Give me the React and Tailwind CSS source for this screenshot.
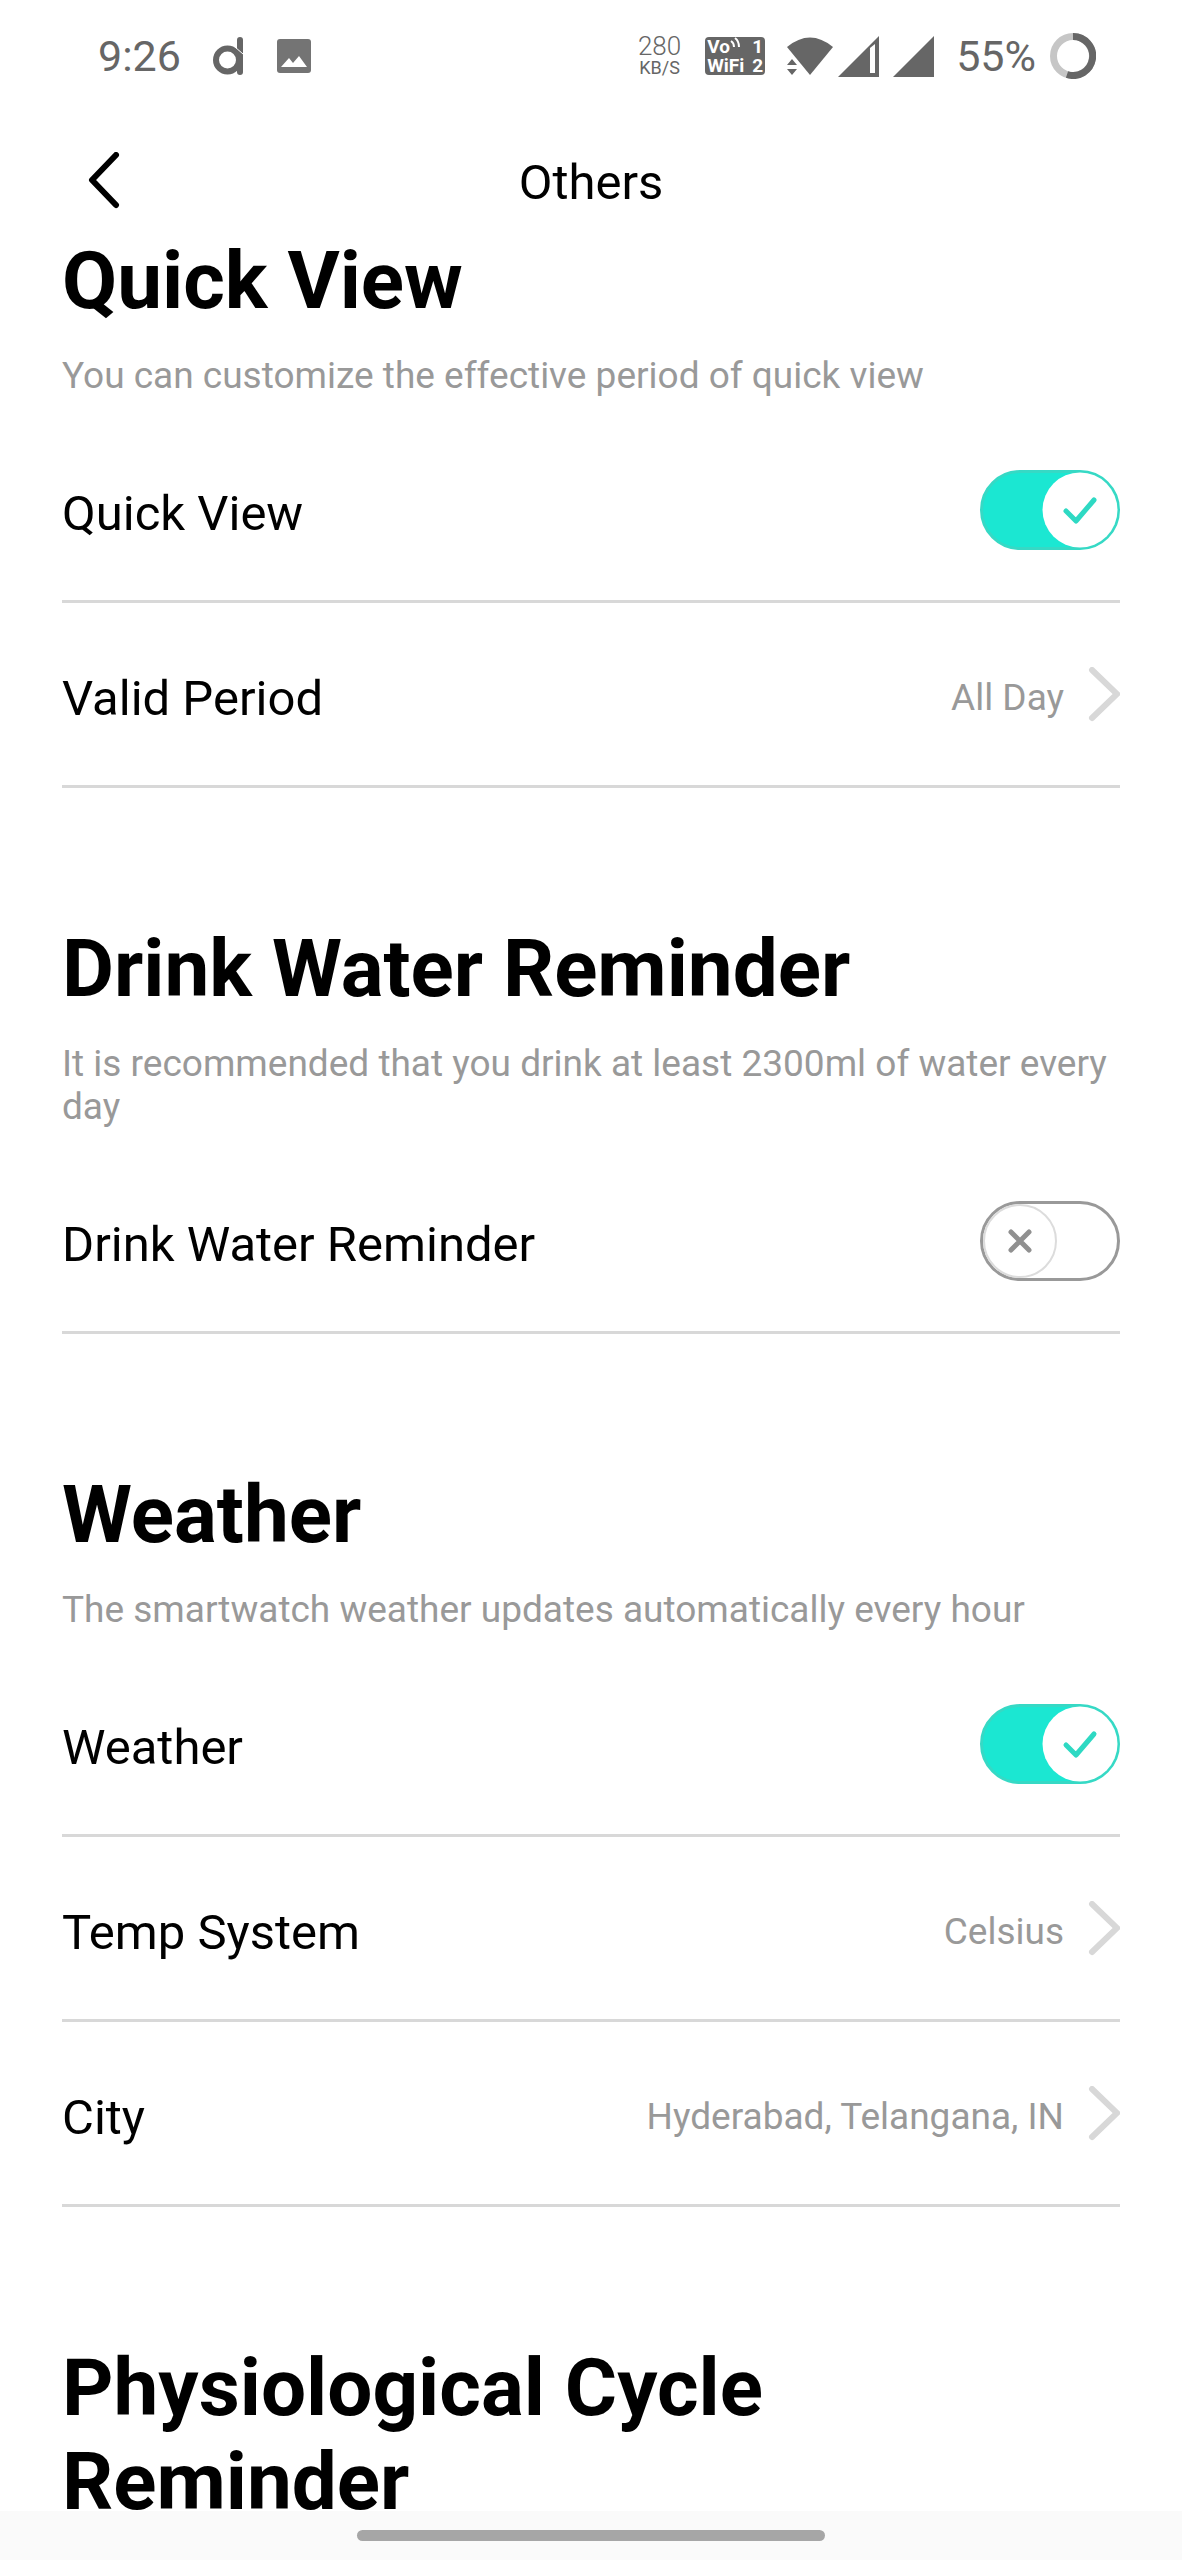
import { useState } from 'react';

const StatusBar = () => {
    return (
        <div className="flex h-28 shrink-0 items-center justify-between pl-[98px] pr-[86px] text-[43px] leading-none text-[#666666]">
            <div className="flex items-center">
                <span>9:26</span>
                <svg className="ml-8 h-10 w-[30px]" viewBox="0 0 30 40" fill="none" stroke="currentColor" strokeWidth="6">
                    <circle cx="14.5" cy="24" r="11.5" />
                    <path d="M27 4v32" strokeLinecap="round" />
                    <path d="M22 11l8 7" stroke="#ffffff" strokeWidth="1" />
                </svg>
                <svg className="ml-[34px] size-[34px]" viewBox="0 0 34 34">
                    <rect width="34" height="34" rx="3" fill="#747474" />
                    <path d="M4 28l8-9 4 5 6-7 8 11z" fill="#ffffff" />
                </svg>
            </div>
            <div className="flex items-center">
                <div className="flex flex-col items-center">
                    <span className="text-[26px] font-light leading-6">280</span>
                    <span className="text-[18px] leading-5">KB/S</span>
                </div>
                <div className="ml-6 flex h-[38px] w-[60px] flex-col rounded-sm bg-[#666666] px-0.5 text-[19px] font-bold leading-[19px] text-white">
                    <div className="flex justify-between">
                        <span className="flex">
                            Vo
                            <svg className="size-3" viewBox="0 0 12 12" fill="none" stroke="currentColor" strokeWidth="2">
                                <path d="M1 4q3 2 3 6M5 1q4 3 4 9" />
                            </svg>
                        </span>
                        <span>1</span>
                    </div>
                    <div className="flex justify-between">
                        <span>WiFi</span>
                        <span>2</span>
                    </div>
                </div>
                <svg className="ml-[21px] h-10 w-12" viewBox="0 0 48 40" fill="currentColor">
                    <path d="M1 11Q24-8 47 11L24 39z" />
                    <path d="M1 29l5-6 5 6zM1 33h10l-5 6z" />
                </svg>
                <svg className="ml-1 h-[41px] w-[41px]" viewBox="0 0 41 41" fill="currentColor">
                    <path d="M0 41L41 0v41z" />
                    <path d="M32 12l5-4v29h-5z" fill="#ffffff" />
                </svg>
                <svg className="ml-3.5 h-[41px] w-[41px]" viewBox="0 0 41 41" fill="currentColor">
                    <path d="M0 41L41 0v41z" />
                </svg>
                <span className="ml-[22px]">55%</span>
                <svg className="ml-3.5 size-[46px]" viewBox="0 0 46 46" fill="none" strokeWidth="7">
                    <circle cx="23" cy="23" r="19.5" stroke="#c6c6c6" />
                    <path d="M23 3.5A19.5 19.5 0 1 1 17 41.5" stroke="#666666" />
                </svg>
            </div>
        </div>
    );
};

const Header = ({ title }) => {
    return (
        <header className="grid h-[122px] shrink-0 grid-cols-[1fr_auto_1fr] items-center px-[62px] pt-4">
            <button type="button" aria-label="Back" className="justify-self-start pl-6">
                <svg className="h-[58px] w-9" viewBox="0 0 36 58" fill="none" stroke="#000000" strokeWidth="6" strokeLinecap="round" strokeLinejoin="round">
                    <path d="M30 3L6 28l24 25" />
                </svg>
            </button>
            <h1 className="pt-0.5 text-[49px] leading-[57px]">{title}</h1>
        </header>
    );
};

const Section = ({ title, description, children }) => {
    return (
        <section className="mb-[134px]">
            <h2 className="text-[80px] font-bold leading-[94px]">{title}</h2>
            {description && <p className="mb-[21px] mt-[26px] text-[37px] leading-[43px] text-[#999999]">{description}</p>}
            {children}
        </section>
    );
};

const SwitchRow = ({ label, defaultChecked = false }) => {
    const [checked, setChecked] = useState(defaultChecked);

    return (
        <label className="flex h-[185px] items-center justify-between border-b-[3px] border-[#d8d8d8] pt-0.5">
            <span className="pt-1.5 text-[49px] leading-[57px]">{label}</span>
            <span className="relative h-20 w-[140px]">
                <input
                    type="checkbox"
                    role="switch"
                    checked={checked}
                    onChange={(e) => setChecked(e.target.checked)}
                    className="block h-20 w-[140px] appearance-none rounded-full border-[3px] border-[#999999] bg-white checked:border-[#36d9c5] checked:bg-[#1be7d2]"
                />
                {checked ? (
                    <svg className="pointer-events-none absolute right-0.5 top-0.5 size-[76px]" viewBox="0 0 76 76" fill="none">
                        <circle cx="38" cy="38" r="37.5" fill="#ffffff" />
                        <path d="M24 39l10 10 18-21" stroke="#2ed9c3" strokeWidth="5" strokeLinecap="round" strokeLinejoin="round" />
                    </svg>
                ) : (
                    <svg className="pointer-events-none absolute left-0.5 top-0.5 size-[76px]" viewBox="0 0 76 76" fill="none">
                        <circle cx="38" cy="38" r="36" stroke="#dcdcdc" strokeWidth="2" />
                        <path d="M29 29l18 18M47 29L29 47" stroke="#909090" strokeWidth="5" strokeLinecap="round" />
                    </svg>
                )}
            </span>
        </label>
    );
};

const LinkRow = ({ label, value }) => {
    return (
        <button type="button" className="flex h-[185px] w-full items-center border-b-[3px] border-[#d8d8d8] pt-0.5 text-left">
            <span className="flex-1 pt-1.5 text-[49px] leading-[57px]">{label}</span>
            <span className="pt-1 text-[37px] leading-[43px] text-[#999999]">{value}</span>
            <svg className="ml-6 h-14 w-8" viewBox="0 0 32 56" fill="none" stroke="#d8d8d8" strokeWidth="6" strokeLinecap="round">
                <path d="M4 3l25 24L4 51" />
            </svg>
        </button>
    );
};

const App = () => {
    return (
        <div className="relative flex h-screen flex-col bg-white font-[Roboto,sans-serif] text-black">
            <StatusBar />
            <Header title="Others" />
            <main className="min-h-0 flex-1 overflow-y-auto px-[62px] [scrollbar-width:none]">
                <Section title="Quick View" description="You can customize the effective period of quick view">
                    <SwitchRow label="Quick View" defaultChecked />
                    <LinkRow label="Valid Period" value="All Day" />
                </Section>
                <Section title="Drink Water Reminder" description="It is recommended that you drink at least 2300ml of water every day">
                    <SwitchRow label="Drink Water Reminder" />
                </Section>
                <Section title="Weather" description="The smartwatch weather updates automatically every hour">
                    <SwitchRow label="Weather" defaultChecked />
                    <LinkRow label="Temp System" value="Celsius" />
                    <LinkRow label="City" value="Hyderabad, Telangana, IN" />
                </Section>
                <Section title="Physiological Cycle Reminder" />
            </main>
            {/* gesture bar, floats over the scrolling list */}
            <div className="absolute inset-x-0 bottom-0 flex h-[49px] items-center justify-center bg-[#fafafa]">
                <div className="h-[11px] w-[468px] rounded-full bg-[#a6a6a6]" />
            </div>
        </div>
    );
};

export default App;
